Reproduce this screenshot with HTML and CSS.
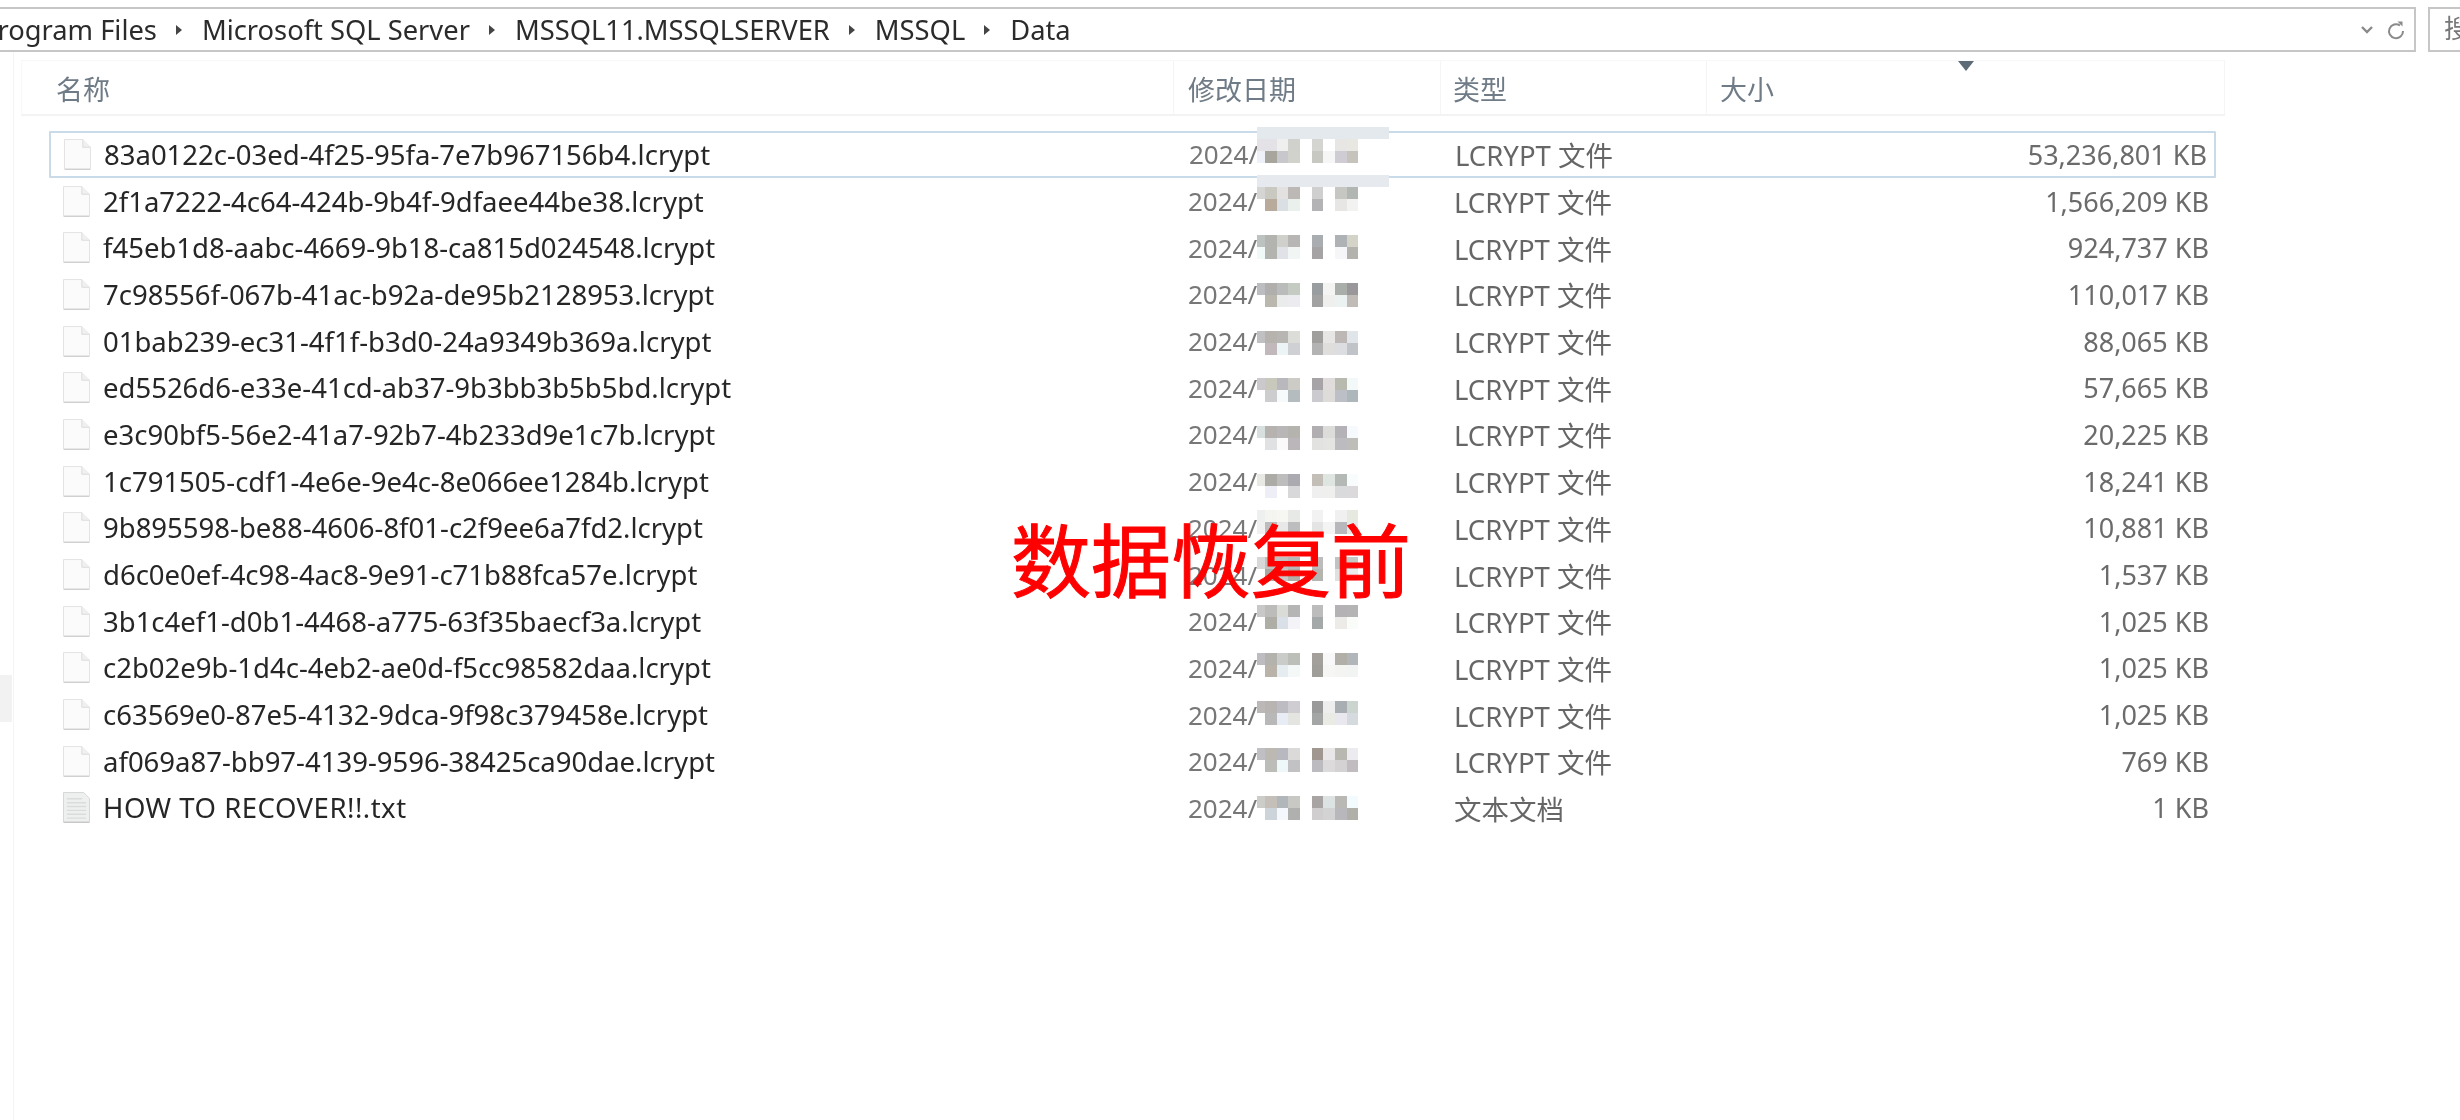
FILE: index.html
```html
<!DOCTYPE html>
<html lang="zh-CN">
<head>
  <meta charset="UTF-8" />
  <title>Data</title>
  <link rel="stylesheet" href="styles.css">
</head>
<body>
  <div class="page">
    <div class="top-bar">
      <div class="address">
        <span class="crumb">Program Files</span><span class="sep"></span>
        <span class="crumb">Microsoft SQL Server</span><span class="sep"></span>
        <span class="crumb">MSSQL11.MSSQLSERVER</span><span class="sep"></span>
        <span class="crumb">MSSQL</span><span class="sep"></span>
        <span class="crumb">Data</span>
        <svg class="chevron" width="14" height="10" viewBox="0 0 14 10"><path d="M2 2l5 5 5-5" fill="none" stroke="#8a8a8a" stroke-width="2.4"/></svg>
        <svg class="refresh" width="20" height="22" viewBox="0 0 20 22"><path d="M14 6.500A7 7 0 1 0 17 12" fill="none" stroke="#8a8a8a" stroke-width="2"/><path d="M11.500 2.500h5v5z" fill="#8a8a8a"/></svg>
      </div>
      <div class="search">搜索</div>
    </div>

    <div class="main">
      <div class="nav-pane"><div class="nav-thumb"></div></div>
      <div class="content">
        <div class="list-head">
          <div class="col-head col-name">名称</div>
          <div class="col-head col-date">修改日期</div>
          <div class="col-head col-type">类型</div>
          <div class="col-head col-size">大小<span class="sort-arrow"></span></div>
        </div>

        <div class="file-list">
          <div class="row selected"><div class="name"><svg class="file-icon"><use href="#page"/></svg>83a0122c-03ed-4f25-95fa-7e7b967156b4.lcrypt</div><div class="date">2024/</div><div class="type">LCRYPT 文件</div><div class="size">53,236,801 KB</div></div>
          <div class="row"><div class="name"><svg class="file-icon"><use href="#page"/></svg>2f1a7222-4c64-424b-9b4f-9dfaee44be38.lcrypt</div><div class="date">2024/</div><div class="type">LCRYPT 文件</div><div class="size">1,566,209 KB</div></div>
          <div class="row"><div class="name"><svg class="file-icon"><use href="#page"/></svg>f45eb1d8-aabc-4669-9b18-ca815d024548.lcrypt</div><div class="date">2024/</div><div class="type">LCRYPT 文件</div><div class="size">924,737 KB</div></div>
          <div class="row"><div class="name"><svg class="file-icon"><use href="#page"/></svg>7c98556f-067b-41ac-b92a-de95b2128953.lcrypt</div><div class="date">2024/</div><div class="type">LCRYPT 文件</div><div class="size">110,017 KB</div></div>
          <div class="row"><div class="name"><svg class="file-icon"><use href="#page"/></svg>01bab239-ec31-4f1f-b3d0-24a9349b369a.lcrypt</div><div class="date">2024/</div><div class="type">LCRYPT 文件</div><div class="size">88,065 KB</div></div>
          <div class="row"><div class="name"><svg class="file-icon"><use href="#page"/></svg>ed5526d6-e33e-41cd-ab37-9b3bb3b5b5bd.lcrypt</div><div class="date">2024/</div><div class="type">LCRYPT 文件</div><div class="size">57,665 KB</div></div>
          <div class="row"><div class="name"><svg class="file-icon"><use href="#page"/></svg>e3c90bf5-56e2-41a7-92b7-4b233d9e1c7b.lcrypt</div><div class="date">2024/</div><div class="type">LCRYPT 文件</div><div class="size">20,225 KB</div></div>
          <div class="row"><div class="name"><svg class="file-icon"><use href="#page"/></svg>1c791505-cdf1-4e6e-9e4c-8e066ee1284b.lcrypt</div><div class="date">2024/</div><div class="type">LCRYPT 文件</div><div class="size">18,241 KB</div></div>
          <div class="row"><div class="name"><svg class="file-icon"><use href="#page"/></svg>9b895598-be88-4606-8f01-c2f9ee6a7fd2.lcrypt</div><div class="date">2024/</div><div class="type">LCRYPT 文件</div><div class="size">10,881 KB</div></div>
          <div class="row"><div class="name"><svg class="file-icon"><use href="#page"/></svg>d6c0e0ef-4c98-4ac8-9e91-c71b88fca57e.lcrypt</div><div class="date">2024/</div><div class="type">LCRYPT 文件</div><div class="size">1,537 KB</div></div>
          <div class="row"><div class="name"><svg class="file-icon"><use href="#page"/></svg>3b1c4ef1-d0b1-4468-a775-63f35baecf3a.lcrypt</div><div class="date">2024/</div><div class="type">LCRYPT 文件</div><div class="size">1,025 KB</div></div>
          <div class="row"><div class="name"><svg class="file-icon"><use href="#page"/></svg>c2b02e9b-1d4c-4eb2-ae0d-f5cc98582daa.lcrypt</div><div class="date">2024/</div><div class="type">LCRYPT 文件</div><div class="size">1,025 KB</div></div>
          <div class="row"><div class="name"><svg class="file-icon"><use href="#page"/></svg>c63569e0-87e5-4132-9dca-9f98c379458e.lcrypt</div><div class="date">2024/</div><div class="type">LCRYPT 文件</div><div class="size">1,025 KB</div></div>
          <div class="row"><div class="name"><svg class="file-icon"><use href="#page"/></svg>af069a87-bb97-4139-9596-38425ca90dae.lcrypt</div><div class="date">2024/</div><div class="type">LCRYPT 文件</div><div class="size">769 KB</div></div>
          <div class="row"><div class="name name-txt"><svg class="file-icon"><use href="#textdoc"/></svg>HOW TO RECOVER!!.txt</div><div class="date">2024/</div><div class="type">文本文档</div><div class="size">1 KB</div></div>
        </div>
      </div>
    </div>

    <!-- pixelated dates, laid over the list in page coordinates -->
    <svg class="mosaic" width="2460" height="1120">
      <rect class="band" y="127" fill="#e4e9ee"/><rect class="band" y="175" fill="#e6eaef"/>
      <g transform="translate(0,139)"><rect class="a" fill="#e4e2e6"/><rect class="b" fill="#e4e2e6"/><rect class="c" fill="#eff0ee"/><rect class="d" fill="#d0d0cc"/><rect class="e" fill="#d4d5d0"/><rect class="f" fill="#e8e6e4"/><rect class="g" fill="#e8e7e2"/></g>
      <g transform="translate(0,151)"><rect class="a" fill="#eef2f8"/><rect class="b" fill="#a8a59c"/><rect class="c" fill="#c8c8cc"/><rect class="d" fill="#d2d2cc"/><rect class="e" fill="#c8c8c2"/><rect class="h" fill="#f6f6f6"/><rect class="f" fill="#cfcdd3"/><rect class="g" fill="#c6c3bc"/></g>
      <g transform="translate(0,187)"><rect class="a" fill="#d5d5d3"/><rect class="b" fill="#c9c9c2"/><rect class="c" fill="#e2e1e0"/><rect class="d" fill="#bbb8b5"/><rect class="e" fill="#cfcfd0"/><rect class="f" fill="#c6c7c3"/><rect class="g" fill="#b2b6b3"/></g>
      <g transform="translate(0,199)"><rect class="b" fill="#b9ab9b"/><rect class="c" fill="#d9dfe3"/><rect class="d" fill="#eaf0ec"/><rect class="e" fill="#b3b3b6"/><rect class="f" fill="#e7e6e5"/><rect class="g" fill="#f2f2f0"/></g>
      <g transform="translate(0,235)"><rect class="a" fill="#bcc2bf"/><rect class="b" fill="#b3b3b0"/><rect class="c" fill="#cfcfcc"/><rect class="d" fill="#b8b6b5"/><rect class="e" fill="#a9adb0"/><rect class="f" fill="#aeb2b5"/><rect class="g" fill="#d3d3c8"/></g>
      <g transform="translate(0,247)"><rect class="a" fill="#f0f8f8"/><rect class="b" fill="#b3b4af"/><rect class="c" fill="#e0e2e8"/><rect class="d" fill="#f1f6f5"/><rect class="e" fill="#a5a3a3"/><rect class="f" fill="#f6f6f8"/><rect class="g" fill="#b3b2ad"/></g>
      <g transform="translate(0,283)"><rect class="a" fill="#bcbdc0"/><rect class="b" fill="#b1afad"/><rect class="c" fill="#b9bcbb"/><rect class="d" fill="#c5cbc3"/><rect class="e" fill="#9a9d9f"/><rect class="h" fill="#f4f4f2"/><rect class="f" fill="#a9aeab"/><rect class="g" fill="#9a979b"/></g>
      <g transform="translate(0,295)"><rect class="b" fill="#bab7ae"/><rect class="c" fill="#eaecec"/><rect class="d" fill="#ecebf0"/><rect class="e" fill="#a3a2a3"/><rect class="h" fill="#efefed"/><rect class="f" fill="#ecf2f2"/><rect class="g" fill="#c0bbb7"/></g>
      <g transform="translate(0,331)"><rect class="a" fill="#c0c0c3"/><rect class="b" fill="#b6b3af"/><rect class="c" fill="#b8b6b2"/><rect class="d" fill="#dcdcd8"/><rect class="e" fill="#a09f9d"/><rect class="h" fill="#e8e6e4"/><rect class="f" fill="#bdb8b5"/><rect class="g" fill="#dfe5e8"/></g>
      <g transform="translate(0,343)"><rect class="b" fill="#c0b8bb"/><rect class="c" fill="#ecf4f5"/><rect class="d" fill="#cfd0d4"/><rect class="e" fill="#b3b3b3"/><rect class="h" fill="#e0dddd"/><rect class="f" fill="#dcdde0"/><rect class="g" fill="#c0c3c7"/></g>
      <g transform="translate(0,378)"><rect class="a" fill="#cbc9cc"/><rect class="b" fill="#c8c9bc"/><rect class="c" fill="#b8b8bd"/><rect class="d" fill="#cdcbc5"/><rect class="e" fill="#a6a4a6"/><rect class="h" fill="#e0dcdc"/><rect class="f" fill="#b8bab0"/><rect class="g" fill="#f3f9f9"/></g>
      <g transform="translate(0,390)"><rect class="b" fill="#cdcdcf"/><rect class="c" fill="#f6fafa"/><rect class="d" fill="#b5bcc0"/><rect class="e" fill="#cbcacf"/><rect class="h" fill="#dedcd9"/><rect class="f" fill="#bcc0c6"/><rect class="g" fill="#adb6ba"/></g>
      <g transform="translate(0,426)"><rect class="a" fill="#d8dfdf"/><rect class="b" fill="#b5b2b0"/><rect class="c" fill="#b8b6b7"/><rect class="d" fill="#b5b3ad"/><rect class="e" fill="#b0aeb0"/><rect class="h" fill="#dcdcdb"/><rect class="f" fill="#b5b2b7"/><rect class="g" fill="#f6fafc"/></g>
      <g transform="translate(0,438)"><rect class="b" fill="#e0e1e3"/><rect class="c" fill="#fafafa"/><rect class="d" fill="#bab6ba"/><rect class="e" fill="#e2e2e0"/><rect class="h" fill="#e4e4e2"/><rect class="f" fill="#bcbcc0"/><rect class="g" fill="#bfbdb8"/></g>
      <g transform="translate(0,474)"><rect class="a" fill="#e8e9e4"/><rect class="b" fill="#adaba6"/><rect class="c" fill="#bdbdbd"/><rect class="d" fill="#abaab0"/><rect class="e" fill="#c3bfb8"/><rect class="h" fill="#dfe5e0"/><rect class="f" fill="#b4b9b6"/><rect class="g" fill="#f8fcfc"/></g>
      <g transform="translate(0,486)"><rect class="b" fill="#eeeff6"/><rect class="d" fill="#d8d8da"/><rect class="e" fill="#f0eff0"/><rect class="h" fill="#efefed"/><rect class="f" fill="#d8dadb"/><rect class="g" fill="#dbd9dc"/></g>
      <g transform="translate(0,510)"><rect class="a" fill="#eef0f0"/><rect class="b" fill="#f4f4f0"/><rect class="c" fill="#f6f6f2"/><rect class="d" fill="#e6e9e6"/><rect class="e" fill="#f2f2f2"/><rect class="f" fill="#f0f0f0"/><rect class="g" fill="#e6e9e0"/></g>
      <g transform="translate(0,522)"><rect class="a" fill="#f0f0f0"/><rect class="b" fill="#bcbcbc"/><rect class="c" fill="#e8e8e8"/><rect class="d" fill="#bdbdc0"/><rect class="e" fill="#e4e4e4"/><rect class="h" fill="#f4f4f4"/><rect class="f" fill="#b8b8bc"/><rect class="g" fill="#e8e8e8"/></g>
      <g transform="translate(0,557)"><rect class="a" fill="#d8d8d8"/><rect class="b" fill="#bfbfbc"/><rect class="c" fill="#c0c0c0"/><rect class="d" fill="#b8b8b8"/><rect class="e" fill="#bcbcbc"/><rect class="f" fill="#c2c2c2"/><rect class="g" fill="#c8c8c4"/></g>
      <g transform="translate(0,569)"><rect class="b" fill="#a8a8a2"/><rect class="c" fill="#c8c8c8"/><rect class="d" fill="#b0b0a8"/><rect class="e" fill="#b4b4b0"/><rect class="f" fill="#e0e0e0"/><rect class="g" fill="#ececec"/></g>
      <g transform="translate(0,605)"><rect class="a" fill="#c8c8c8"/><rect class="b" fill="#bcbcba"/><rect class="c" fill="#dadcd8"/><rect class="d" fill="#b5b5b5"/><rect class="e" fill="#bcbcbc"/><rect class="f" fill="#b4b2b4"/><rect class="g" fill="#b4b4b4"/></g>
      <g transform="translate(0,617)"><rect class="b" fill="#aeaea6"/><rect class="c" fill="#dae0e8"/><rect class="d" fill="#f4f4f8"/><rect class="e" fill="#a4a8a8"/><rect class="f" fill="#ecebe8"/><rect class="g" fill="#fafcfa"/></g>
      <g transform="translate(0,653)"><rect class="a" fill="#bebcc0"/><rect class="b" fill="#b4b2ac"/><rect class="c" fill="#c9ccc8"/><rect class="d" fill="#bcbfb8"/><rect class="e" fill="#a3a09c"/><rect class="h" fill="#f8f8f8"/><rect class="f" fill="#b2afa8"/><rect class="g" fill="#b0b6ba"/></g>
      <g transform="translate(0,665)"><rect class="b" fill="#b9b3aa"/><rect class="c" fill="#e6edf0"/><rect class="d" fill="#f4f8f6"/><rect class="e" fill="#a09e98"/><rect class="h" fill="#f6f6f4"/><rect class="f" fill="#f4f4f2"/><rect class="g" fill="#f2f4f4"/></g>
      <g transform="translate(0,701)"><rect class="a" fill="#bcb8b8"/><rect class="b" fill="#b8b4b2"/><rect class="c" fill="#bcbcc2"/><rect class="d" fill="#cfccd2"/><rect class="e" fill="#9a9a9a"/><rect class="h" fill="#eeeeee"/><rect class="f" fill="#a9aeb3"/><rect class="g" fill="#ccd4cf"/></g>
      <g transform="translate(0,713)"><rect class="b" fill="#b8b8b8"/><rect class="c" fill="#e8ecf4"/><rect class="d" fill="#e4e4e0"/><rect class="e" fill="#a4a6a6"/><rect class="h" fill="#ebebe6"/><rect class="f" fill="#e8e8ee"/><rect class="g" fill="#d4dadd"/></g>
      <g transform="translate(0,748)"><rect class="a" fill="#c0c0c4"/><rect class="b" fill="#bcb9b2"/><rect class="c" fill="#b8b8c0"/><rect class="d" fill="#dcdad8"/><rect class="e" fill="#a09890"/><rect class="h" fill="#e8e6e6"/><rect class="f" fill="#b8b8b0"/><rect class="g" fill="#ebebf0"/></g>
      <g transform="translate(0,760)"><rect class="b" fill="#bcbcb8"/><rect class="c" fill="#eef8f8"/><rect class="d" fill="#c2c2c4"/><rect class="e" fill="#bcbcc0"/><rect class="h" fill="#dcdada"/><rect class="f" fill="#d4d2d2"/><rect class="g" fill="#c0bcc0"/></g>
      <g transform="translate(0,796)"><rect class="a" fill="#ccccc8"/><rect class="b" fill="#c4bfb8"/><rect class="c" fill="#b0b6ba"/><rect class="d" fill="#c8c8c4"/><rect class="e" fill="#a8a4a4"/><rect class="h" fill="#dde2e3"/><rect class="f" fill="#bab8b5"/><rect class="g" fill="#f2fcfe"/></g>
      <g transform="translate(0,808)"><rect class="b" fill="#ccd4da"/><rect class="c" fill="#f4f8fc"/><rect class="d" fill="#b0b0ae"/><rect class="e" fill="#d0cece"/><rect class="h" fill="#d4d3d3"/><rect class="f" fill="#b8b8bc"/><rect class="g" fill="#b0b0a8"/></g>
    </svg>
  </div>

  <div class="stamp">数据恢复前</div>

  <svg class="icon-defs" width="0" height="0">
    <symbol id="page" viewBox="0 0 28 32">
      <path d="M.5.500h19l8 8v23H.5z" fill="#fbfbfb" stroke="#e2e2e2"/>
      <path d="M19.500.500v8h8" fill="#f0f0f0" stroke="#dcdcdc"/>
      <path d="M1 31.300h26" stroke="#cfcfcf" stroke-width="1.400"/>
    </symbol>
    <symbol id="textdoc" viewBox="0 0 28 32">
      <path d="M.5.500h21l6 6v25H.5z" fill="#eef0f0" stroke="#d4d6d6"/>
      <path d="M4 7h16M4 11h20M4 15h20M4 19h20M4 23h20M4 27h20" stroke="#dadcdc" stroke-width="1.500"/>
      <path d="M1 31.300h26" stroke="#c6c6c6" stroke-width="1.400"/>
    </symbol>
  </svg>
</body>
</html>
```

FILE: styles.css
```css
html, body {
  margin: 0;
  height: 100%;
  background-color: #fff;
  overflow: hidden;
}
body {
  position: relative;
  font-family: "Noto Sans", "Noto Sans CJK SC", sans-serif;
}
.page {
  height: 100%;
  filter: blur(0.6px);
}

/* address bar */
.top-bar {
  display: flex;
  gap: 12px;
  height: 45px;
  padding-top: 7px;
  margin-left: -40px;
  margin-right: -60px;
}
.address {
  display: flex;
  align-items: center;
  width: 2457px;
  box-sizing: border-box;
  padding-left: 21px;
  border: 2px solid #c6c6c6;
  border-left: none;
  font-size: 27.3px;
  color: #2b2b2b;
  white-space: nowrap;
}
.sep {
  width: 0;
  height: 0;
  margin: 0 20px 0 19px;
  border-left: 6px solid #444;
  border-top: 5px solid transparent;
  border-bottom: 5px solid transparent;
}
.chevron {
  margin-left: auto;
  margin-right: 12px;
}
.refresh {
  margin-right: 8px;
}
.search {
  box-sizing: border-box;
  width: 92px;
  padding-left: 14px;
  border: 2px solid #c6c6c6;
  font-size: 26px;
  line-height: 39px;
  color: #777;
  white-space: nowrap;
}

.main {
  display: flex;
  height: 1068px;
}
.nav-pane {
  width: 13px;
  border-right: 1px solid #f5f5f7;
}
.nav-thumb {
  width: 12px;
  height: 47px;
  margin-top: 623px;
  background-color: #f2f2f2;
}
.content {
  padding-left: 7px;
  padding-top: 8px;
}

/* column headers */
.list-head {
  display: flex;
  width: 2204px;
  height: 56px;
  border-top: 1px solid #f8f8f8;
  border-left: 1px solid #f8f8f8;
  border-bottom: 2px solid #f3f3f3;
  box-sizing: border-box;
}
.col-head {
  position: relative;
  box-sizing: border-box;
  line-height: 58px;
  font-size: 27px;
  color: #6f7b86;
  border-right: 1px solid #f5f5f5;
}
.col-name { width: 1152px; padding-left: 34px; }
.col-date { width: 267px; padding-left: 14px; }
.col-type { width: 266px; padding-left: 12px; }
.col-size { flex: 1; padding-left: 13px; }
.sort-arrow {
  position: absolute;
  top: 0;
  left: 251px;
  width: 0;
  height: 0;
  border-left: 8px solid transparent;
  border-right: 8px solid transparent;
  border-top: 10px solid #5d6b77;
}

/* file rows */
.file-list {
  width: 2166px;
  margin-left: 29px;
  margin-top: 15px;
}
.row {
  display: grid;
  grid-template-columns: 1138px 267px 265px 1fr;
  align-items: center;
  height: 46.7px;
  box-sizing: border-box;
  font-size: 27.5px;
  white-space: nowrap;
}
.row.selected {
  border: 2px solid #c9dbe9;
  border-radius: 1px;
  margin: 0 0 0 -1px;
  width: 2167px;
}
.name {
  display: flex;
  align-items: center;
  gap: 13px;
  padding-left: 13px;
  color: #262626;
}
.name-txt { letter-spacing: 0.5px; }
.date { color: #777; font-size: 26px; }
.type { color: #666; margin-left: -1px; }
.size {
  text-align: right;
  padding-right: 7px;
  font-size: 27px;
  color: #6b6b6b;
}
.file-icon {
  width: 27px;
  height: 31px;
  flex: none;
}
.icon-defs {
  position: absolute;
}

/* pixelated dates */
.mosaic {
  position: absolute;
  left: 0;
  top: 0;
  pointer-events: none;
}
.mosaic rect { height: 12px; }
.mosaic .band { x: 1257px; width: 132px; }
.mosaic .a { x: 1257px; width: 8px; }
.mosaic .b { x: 1265px; width: 12px; }
.mosaic .c { x: 1277px; width: 11px; }
.mosaic .d { x: 1288px; width: 12px; }
.mosaic .e { x: 1312px; width: 11px; }
.mosaic .h { x: 1323px; width: 12px; }
.mosaic .f { x: 1335px; width: 12px; }
.mosaic .g { x: 1347px; width: 11px; }

/* red caption pasted over the list */
.stamp {
  position: absolute;
  left: 1011px;
  top: 508px;
  font-family: "Noto Sans CJK SC", sans-serif;
  font-size: 80px;
  line-height: 96px;
  color: #f00;
  -webkit-text-stroke: 1px #f00;
  white-space: nowrap;
}
```
